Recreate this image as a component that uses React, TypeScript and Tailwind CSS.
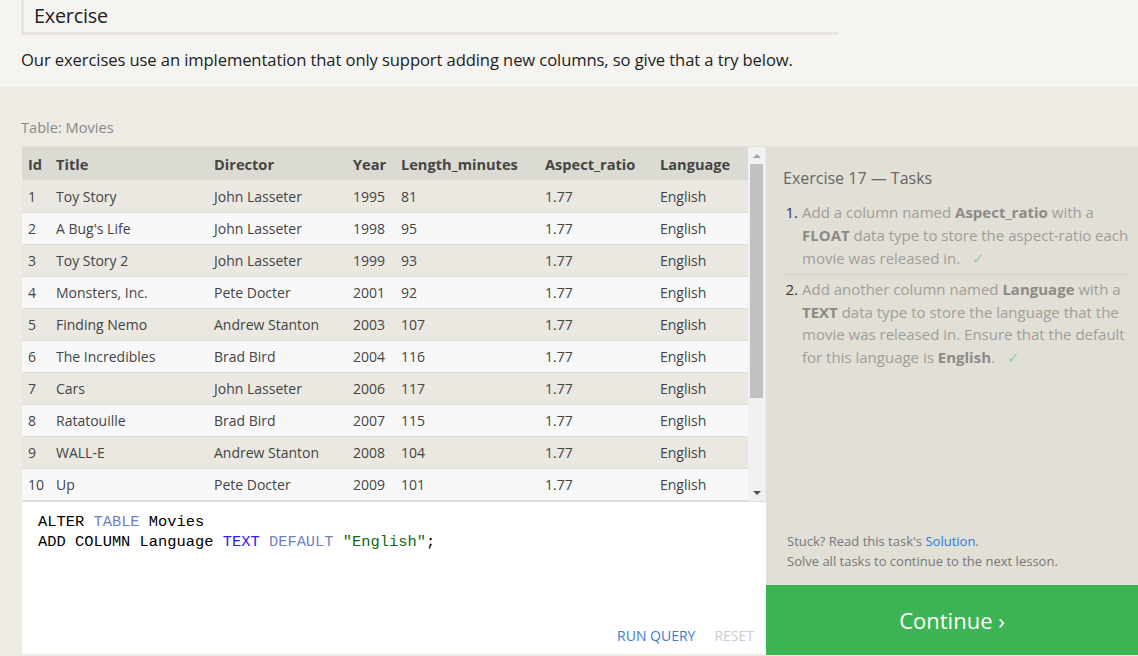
import React from "react";

const rows = [
  [1, "Toy Story", "John Lasseter", 1995, 81],
  [2, "A Bug's Life", "John Lasseter", 1998, 95],
  [3, "Toy Story 2", "John Lasseter", 1999, 93],
  [4, "Monsters, Inc.", "Pete Docter", 2001, 92],
  [5, "Finding Nemo", "Andrew Stanton", 2003, 107],
  [6, "The Incredibles", "Brad Bird", 2004, 116],
  [7, "Cars", "John Lasseter", 2006, 117],
  [8, "Ratatouille", "Brad Bird", 2007, 115],
  [9, "WALL-E", "Andrew Stanton", 2008, 104],
  [10, "Up", "Pete Docter", 2009, 101],
];

const widths = ["w-[28px]", "w-[158px]", "w-[139px]", "w-[48px]", "w-[144px]", "w-[115px]", "w-[94px]"];
const heads = ["Id", "Title", "Director", "Year", "Length_minutes", "Aspect_ratio", "Language"];

export default function App() {
  return (
    <div className="w-[1138px] h-[656px] overflow-hidden bg-[#eeebe4] text-[#333]" style={{ fontFamily: '"Open Sans", "Noto Sans", sans-serif' }}>
      <div className="bg-[#f5f4f0] h-[88px] pl-[21px] pt-0">
        <div className="w-[817px] h-[36px] border-l-[3px] border-b-[3px] border-[#e6e4dd] pl-[10px] flex items-center -mt-[1px]">
          <span className="text-[19.8px] text-[#222] tracking-[-0.2px]">Exercise</span>
        </div>
        <p className="mt-[14px] text-[16.6px] leading-[22px] text-[#222] tracking-[-0.1px]">
          Our exercises use an implementation that only support adding new columns, so give that a try below.
        </p>
      </div>
      <div className="pl-[22px]">
        <div className="h-[59px] flex items-end pb-[10px] -ml-[1px]">
          <span className="text-[14.6px] text-[#888] leading-[18px]">Table: Movies</span>
        </div>
        <div className="flex border-t border-[#e4e2da]">
          <div className="w-[744px] flex flex-col">
            <div className="flex h-[354px]">
              <table className="table-fixed border-collapse w-[726px] text-[14px] self-start">
                <thead>
                  <tr className="bg-[#dcdbd3] h-[33px]">
                    {heads.map((h, i) => (
                      <th key={h} className={`${widths[i]} text-left font-bold text-[#444] text-[14.6px] pl-[6px] pt-[2px]`}>{h}</th>
                    ))}
                  </tr>
                </thead>
                <tbody>
                  {rows.map((r, idx) => (
                    <tr key={idx} className={`h-[32px] border-b border-[#dfddd7] ${idx % 2 === 0 ? "bg-[#eae8e1]" : "bg-[#f8f8f8]"} text-[#444]`}>
                      <td className="pl-[6px] pt-[1px]">{r[0]}</td>
                      <td className="pl-[6px] pt-[1px]">{r[1]}</td>
                      <td className="pl-[6px] pt-[1px]">{r[2]}</td>
                      <td className="pl-[6px] pt-[1px]">{r[3]}</td>
                      <td className="pl-[6px] pt-[1px]">{r[4]}</td>
                      <td className="pl-[6px] pt-[1px]">1.77</td>
                      <td className="pl-[6px] pt-[1px]">English</td>
                    </tr>
                  ))}
                </tbody>
              </table>
              <div className="w-[17px] bg-[#f1f1f1] flex flex-col items-center">
                <div className="h-[17px] flex items-center justify-center">
                  <div className="w-0 h-0 border-l-[4px] border-r-[4px] border-b-[4px] border-l-transparent border-r-transparent border-b-[#a3a3a3]" />
                </div>
                <div className="w-[13px] h-[234px] bg-[#c1c1c1]" />
                <div className="flex-1" />
                <div className="h-[17px] flex items-center justify-center">
                  <div className="w-0 h-0 border-l-[4px] border-r-[4px] border-t-[4px] border-l-transparent border-r-transparent border-t-[#505050]" />
                </div>
              </div>
            </div>
            <div className="bg-white h-[153px] border-t border-[#e0ded8] flex flex-col">
              <div className="pl-[16px] pt-[10px] text-[15.4px] leading-[20px] text-black" style={{ fontFamily: '"Liberation Mono", "DejaVu Sans Mono", monospace' }}>
                <div>
                  ALTER <span className="text-[#6f7fbf]">TABLE</span> Movies
                </div>
                <div>
                  ADD COLUMN Language <span className="text-[#2b1bff]">TEXT</span> <span className="text-[#6f7fbf]">DEFAULT</span> <span className="text-[#116611]">"English"</span>;
                </div>
              </div>
              <div className="flex-1" />
              <div className="flex justify-end gap-[19px] pr-[12px] pb-[8px] text-[14px]">
                <span className="text-[#3a7bd5]">RUN QUERY</span>
                <span className="text-[#cccccc]">RESET</span>
              </div>
            </div>
          </div>
          <div className="flex-1 flex flex-col">
            <div className="bg-[#e2dfd7] h-[438px] flex flex-col pl-[17px] pr-[8px]">
              <div className="pt-[20px] text-[16px] text-[#666] leading-[22px]">Exercise 17 — Tasks</div>
              <ol className="mt-[12px] text-[15px] leading-[23px] text-[#a09e9a]">
                <li className="flex border-b border-[#d2cfc7] pb-[4px]">
                  <span className="w-[19px] text-[#333] text-right pr-[4px] shrink-0">1.</span>
                  <span>
                    Add a column named <b className="text-[#8c8a86]">Aspect_ratio</b> with a <b className="text-[#8c8a86]">FLOAT</b> data type to store the aspect-ratio each movie was released in.
                    <span className="text-[#8fd19e] ml-[12px]">✓</span>
                  </span>
                </li>
                <li className="flex pt-[3px] leading-[22.5px]">
                  <span className="w-[19px] text-[#333] text-right pr-[4px] shrink-0">2.</span>
                  <span>
                    Add another column named <b className="text-[#8c8a86]">Language</b> with a <b className="text-[#8c8a86]">TEXT</b> data type to store the language that the movie was released in. Ensure that the default for this language is <b className="text-[#8c8a86]">English</b>.
                    <span className="text-[#8fd19e] ml-[12px]">✓</span>
                  </span>
                </li>
              </ol>
              <div className="flex-1" />
              <div className="pl-[4px] pb-[14px] text-[13px] leading-[20px] text-[#777]">
                <div>Stuck? Read this task's <span className="text-[#2a7ae2]">Solution</span>.</div>
                <div>Solve all tasks to continue to the next lesson.</div>
              </div>
            </div>
            <div className="bg-[#3db454] h-[70px] flex items-center justify-center text-white text-[22px]">
              Continue ›
            </div>
          </div>
        </div>
      </div>
    </div>
  );
}
